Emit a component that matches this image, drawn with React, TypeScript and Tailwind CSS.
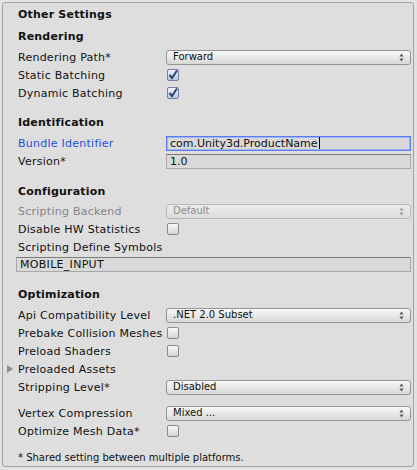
import React from 'react'

const font = { fontFamily: '"DejaVu Sans", Verdana, sans-serif' }

function Arrows() {
  return (
    <svg width="5" height="9" viewBox="0 0 5 9" className="shrink-0">
      <path d="M2.5 0.5 L4.5 3.5 L0.5 3.5 Z" fill="#555" />
      <path d="M2.5 8.5 L4.5 5.5 L0.5 5.5 Z" fill="#555" />
    </svg>
  )
}

function Dropdown({ value, disabled }: { value: string; disabled?: boolean }) {
  return (
    <div
      className={
        'flex items-center justify-between w-[245px] h-[15px] rounded-[3px] border pl-[6px] pr-[6px] text-[10px] leading-none bg-gradient-to-b ' +
        (disabled
          ? 'border-[#b8b8b8] from-[#ececec] to-[#dcdcdc] text-[#8c8c8c]'
          : 'border-[#959595] from-[#f8f8f8] to-[#d8d8d8] text-[#111]')
      }
    >
      <span>{value}</span>
      <span className={disabled ? 'opacity-50' : ''}>
        <Arrows />
      </span>
    </div>
  )
}

function Checkbox({ checked }: { checked?: boolean }) {
  return (
    <div
      className={
        'ml-[1px] w-[12px] h-[12px] rounded-[2px] border flex items-center justify-center bg-gradient-to-b ' +
        (checked ? 'border-[#6f7f9c] from-[#eef2fa] to-[#b9c6de]' : 'border-[#8a8a8a] from-[#fafafa] to-[#d4d4d4]')
      }
    >
      {checked && (
        <svg width="10" height="10" viewBox="0 0 10 10">
          <path d="M1.5 5 L4 8 L9 0.5" fill="none" stroke="#2f4675" strokeWidth="2" />
        </svg>
      )}
    </div>
  )
}

function TextField({ value, focused, wide }: { value: string; focused?: boolean; wide?: boolean }) {
  return (
    <div
      className={
        'flex items-center h-[15px] pl-[3px] text-[11px] leading-none text-[#111] bg-[#d9d9d9] border ' +
        (wide ? 'w-[395px] tracking-[0.3px] ' : 'w-[245px] ') +
        (focused
          ? 'border-[#5a7cf0] shadow-[inset_0_0_0_1px_#9fb3f5]'
          : 'border-[#a8a8a8] border-t-[#7c7c7c]')
      }
    >
      <span>{value}</span>
      {focused && <span className="w-px h-[12px] bg-black ml-px" />}
    </div>
  )
}

function Row({ label, children, tone, mt, arrow }: { label: string; children?: React.ReactNode; tone?: string; mt?: string; arrow?: boolean }) {
  return (
    <div className={'flex items-center h-[18px] ' + (mt ?? '')}>
      {arrow && (
        <div className="ml-[-11px] w-[11px] flex items-center">
          <svg width="6" height="8" viewBox="0 0 6 8">
            <path d="M0 0 L6 4 L0 8 Z" fill="#8c8c8c" />
          </svg>
        </div>
      )}
      <div className={'w-[148px] text-[11px] leading-none whitespace-nowrap tracking-[0.25px] ' + (tone ?? 'text-[#111]')}>{label}</div>
      {children}
    </div>
  )
}

function Header({ text, mt }: { text: string; mt: string }) {
  return <div className={'h-[18px] flex items-center text-[11px] font-bold tracking-[0.2px] text-[#111] ' + mt}>{text}</div>
}

export default function App() {
  return (
    <div className="w-[417px] h-[470px] bg-[#e2e2e2] pt-[2px] pl-[2px]" style={font}>
      <div className="w-[412px] h-[465px] bg-[#dedede] border border-[#a3a3a3] rounded-[3px] pl-[15px] pr-[2px] pt-[2px] flex flex-col">
        <Header text="Other Settings" mt="mt-[1px]" />

        <Header text="Rendering" mt="mt-[4px]" />
        <Row label="Rendering Path*" mt="mt-[2px]">
          <Dropdown value="Forward" />
        </Row>
        <Row label="Static Batching">
          <Checkbox checked />
        </Row>
        <Row label="Dynamic Batching">
          <Checkbox checked />
        </Row>

        <Header text="Identification" mt="mt-[12px]" />
        <Row label="Bundle Identifier" tone="text-[#1f4fd6]" mt="mt-[2px]">
          <TextField value="com.Unity3d.ProductName" focused />
        </Row>
        <Row label="Version*">
          <TextField value="1.0" />
        </Row>

        <Header text="Configuration" mt="mt-[13px]" />
        <Row label="Scripting Backend" tone="text-[#858585]" mt="mt-[1px]">
          <Dropdown value="Default" disabled />
        </Row>
        <Row label="Disable HW Statistics">
          <Checkbox />
        </Row>
        <Row label="Scripting Define Symbols" />
        <div className="ml-[-2px] mt-[1px]">
          <TextField value="MOBILE_INPUT" wide />
        </div>

        <Header text="Optimization" mt="mt-[14px]" />
        <Row label="Api Compatibility Level" mt="mt-[2px]">
          <Dropdown value=".NET 2.0 Subset" />
        </Row>
        <Row label="Prebake Collision Meshes">
          <Checkbox />
        </Row>
        <Row label="Preload Shaders">
          <Checkbox />
        </Row>
        <Row label="Preloaded Assets" arrow />
        <Row label="Stripping Level*">
          <Dropdown value="Disabled" />
        </Row>
        <Row label="Vertex Compression" mt="mt-[8px]">
          <Dropdown value="Mixed ..." />
        </Row>
        <Row label="Optimize Mesh Data*">
          <Checkbox />
        </Row>

        <div className="mt-[10px] h-[14px] flex items-center text-[10px] text-[#111]">
          * Shared setting between multiple platforms.
        </div>
      </div>
    </div>
  )
}
